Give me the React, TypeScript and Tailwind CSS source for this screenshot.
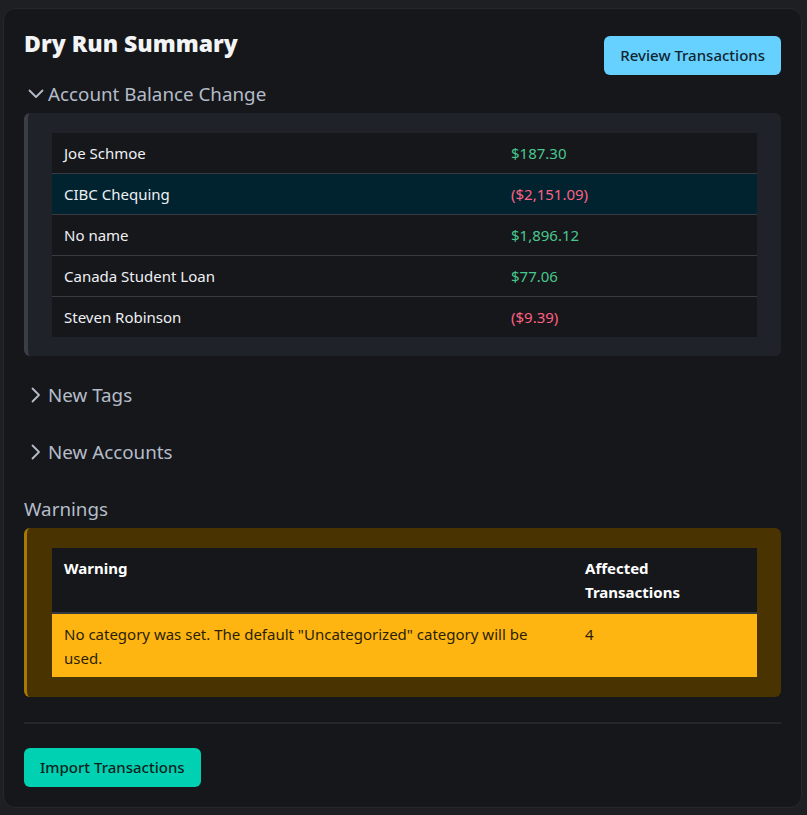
type Balance = {
  name: string;
  amount: string;
  positive: boolean;
};

const balances: Balance[] = [
  { name: "Joe Schmoe", amount: "$187.30", positive: true },
  { name: "CIBC Chequing", amount: "($2,151.09)", positive: false },
  { name: "No name", amount: "$1,896.12", positive: true },
  { name: "Canada Student Loan", amount: "$77.06", positive: true },
  { name: "Steven Robinson", amount: "($9.39)", positive: false },
];

function SectionToggle({ label, open }: { label: string; open: boolean }) {
  return (
    <button
      type="button"
      className="flex items-center text-[18.8px] leading-[24px] text-[#b4bcc8]"
    >
      <span className="flex w-6 items-center justify-center">
        {open ? (
          <svg width="16" height="10" viewBox="0 0 16 10" fill="none" aria-hidden="true">
            <polyline
              points="1.5,1.5 8,8 14.5,1.5"
              stroke="currentColor"
              strokeWidth="1.8"
              strokeLinecap="round"
              strokeLinejoin="round"
            />
          </svg>
        ) : (
          <svg width="10" height="16" viewBox="0 0 10 16" fill="none" aria-hidden="true">
            <polyline
              points="1.5,1.5 8,8 1.5,14.5"
              stroke="currentColor"
              strokeWidth="1.8"
              strokeLinecap="round"
              strokeLinejoin="round"
            />
          </svg>
        )}
      </span>
      {label}
    </button>
  );
}

export default function App() {
  return (
    <div
      className="min-h-screen bg-[#1e1f23] pt-2 pl-[3px] pr-[5px] pb-2"
      style={{ fontFamily: '"Noto Sans", "Open Sans", sans-serif' }}
    >
      <div className="rounded-xl border border-[#26282d] bg-[#16171b] px-5 pt-[19px] pb-5">
        {/* Titre + bouton */}
        <div className="flex items-start justify-between">
          <h1 className="text-[23px] leading-[30px] font-black text-[#f3f4f6]">
            Dry Run Summary
          </h1>
          <button
            type="button"
            className="mt-[8px] -mb-[1px] h-[39px] rounded-md bg-[#66d1ff] px-4 text-[15px] font-medium text-[#0f2530]"
          >
            Review Transactions
          </button>
        </div>

        {/* Account Balance Change */}
        <div className="mt-2">
          <SectionToggle label="Account Balance Change" open />
        </div>
        <div className="mt-[7px] rounded-md border-l-4 border-[#3b3e47] bg-[#202229] px-6 pt-5 pb-[19px]">
          <table className="w-full table-fixed border-collapse bg-[#16171b] text-[15px] text-[#eef0f3]">
            <colgroup>
              <col className="w-[447px]" />
              <col />
            </colgroup>
            <tbody>
              {balances.map((b, i) => (
                <tr
                  key={b.name}
                  className={`${i === 1 ? "bg-[#012330]" : ""} ${
                    i < balances.length - 1 ? "border-b border-[#393a42]" : ""
                  }`}
                >
                  <td className="px-3 py-2 leading-[24px]">{b.name}</td>
                  <td
                    className={`px-3 py-2 leading-[24px] ${
                      b.positive ? "text-[#48c78e]" : "text-[#ff6082]"
                    }`}
                  >
                    {b.amount}
                  </td>
                </tr>
              ))}
            </tbody>
          </table>
        </div>

        {/* Sections repliées */}
        <div className="mt-[27px]">
          <SectionToggle label="New Tags" open={false} />
        </div>
        <div className="mt-[33px]">
          <SectionToggle label="New Accounts" open={false} />
        </div>

        {/* Warnings */}
        <h2 className="mt-[33px] text-[18.8px] leading-[24px] text-[#b4bcc8]">Warnings</h2>
        <div className="mt-[7px] rounded-md border-l-[3px] border-[#a87800] bg-[#493300] pl-[25px] pr-6 pt-5 pb-5">
          <table className="w-full table-fixed border-collapse text-[15px]">
            <colgroup>
              <col className="w-[521px]" />
              <col />
            </colgroup>
            <thead>
              <tr className="border-b-2 border-[#363840] bg-[#16171b] text-left align-top text-white">
                <th className="px-3 py-2 leading-[24px] font-bold">Warning</th>
                <th className="px-3 py-2 leading-[24px] font-bold">
                  Affected
                  <br />
                  Transactions
                </th>
              </tr>
            </thead>
            <tbody>
              <tr className="bg-[#ffb511] align-top text-[#2a1f04]">
                <td className="px-3 pt-2 pb-[7px] leading-[24px]">
                  <div className="max-w-[480px]">
                    No category was set. The default "Uncategorized" category will be used.
                  </div>
                </td>
                <td className="px-3 pt-2 pb-[7px] leading-[24px]">4</td>
              </tr>
            </tbody>
          </table>
        </div>

        <hr className="mt-[25px] border-t-2 border-[#25272d]" />

        <button
          type="button"
          className="mt-[24px] h-[39px] rounded-md bg-[#00d1b2] px-4 text-[15px] font-medium text-[#0b1f1c]"
        >
          Import Transactions
        </button>
      </div>
    </div>
  );
}
